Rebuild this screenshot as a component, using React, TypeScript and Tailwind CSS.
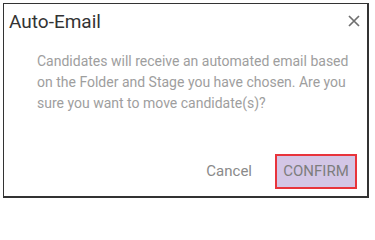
import React from "react";

export default function App() {
  return (
    <div className="w-[375px] h-[202px] bg-white pt-[3px] pl-[3px]" style={{ fontFamily: "Roboto, 'Liberation Sans', sans-serif" }}>
      <div className="w-[366px] h-[195px] border-[1.5px] border-r-2 border-b-2 border-[#333] flex flex-col bg-white">
        <div className="flex justify-between items-start">
          <div className="pl-[5px] pt-[7px] text-[19px] leading-[22px] text-[#333]">Auto-Email</div>
          <svg className="mt-[11px] mr-[7px]" width="12" height="12" viewBox="0 0 12 12" fill="none">
            <path d="M1 1L11 11M11 1L1 11" stroke="#6f6f6f" strokeWidth="1.7" />
          </svg>
        </div>
        <div className="mt-[18px] pl-[33px] w-[362px] text-[14px] leading-[21px] text-[#9e9e9e]">
          Candidates will receive an automated email based on the Folder and Stage you have chosen. Are you sure you want to move candidate(s)?
        </div>
        <div className="mt-auto mb-[7px] mr-[10px] flex justify-end items-center">
          <span className="text-[15px] text-[#8a8a8a] mr-[23px]">Cancel</span>
          <div className="w-[82px] h-[35px] border-2 border-[#e8343c] bg-[#d3c6e6] flex items-center justify-center text-[15px] text-[#7d7d7d]">
            CONFIRM
          </div>
        </div>
      </div>
    </div>
  );
}
